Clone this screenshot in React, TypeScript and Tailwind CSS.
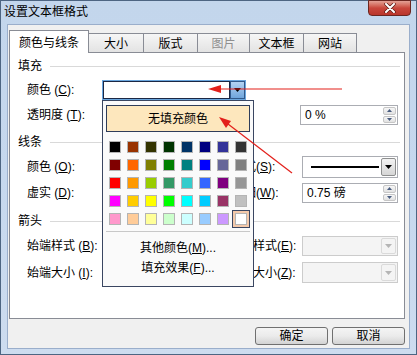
import React from "react"

const palette = [
  ["#000000", "#993300", "#333300", "#003300", "#003366", "#000080", "#333399", "#333333"],
  ["#800000", "#FF6600", "#808000", "#008000", "#008080", "#0000FF", "#666699", "#808080"],
  ["#FF0000", "#FF9900", "#99CC00", "#339966", "#33CCCC", "#3366FF", "#800080", "#969696"],
  ["#FF00FF", "#FFCC00", "#FFFF00", "#00FF00", "#00FFFF", "#00CCFF", "#993366", "#C0C0C0"],
  ["#FF99CC", "#FFCC99", "#FFFF99", "#CCFFCC", "#CCFFFF", "#99CCFF", "#CC99FF", "#FFFFFF"],
]

const tabs = [
  { label: "颜色与线条", width: "w-[80px]", active: true },
  { label: "大小", width: "w-[55px]" },
  { label: "版式", width: "w-[55px]" },
  { label: "图片", width: "w-[53px]", disabled: true },
  { label: "文本框", width: "w-[55px]" },
  { label: "网站", width: "w-[54px]" },
]

function Tri({ color = "#000" }: { color?: string }) {
  return (
    <svg width="7" height="4" viewBox="0 0 7 4">
      <path d="M0 0H7L3.5 4z" fill={color} />
    </svg>
  )
}

function DropBtn({ disabled }: { disabled?: boolean }) {
  return (
    <div
      className={
        disabled
          ? "w-[15px] my-px mr-px flex items-center justify-center rounded-[2px] border border-[#dadada] bg-[#f4f4f4]"
          : "w-[15px] my-px mr-px flex items-center justify-center rounded-[2px] border border-[#8e8f8f] bg-gradient-to-b from-[#f3f3f3] to-[#d6d6d6]"
      }
    >
      <Tri color={disabled ? "#b5b5b5" : "#000"} />
    </div>
  )
}

function SpinBox({ value, className }: { value: string; className: string }) {
  return (
    <div className={`flex border border-[#abadb3] bg-white ${className}`}>
      <span className="flex-1 flex items-center pl-[4px]">{value}</span>
      <div className="w-[15px] flex flex-col gap-px p-px">
        <div className="flex-1 flex items-center justify-center rounded-[2px] border border-[#c6c6c6] bg-gradient-to-b from-[#f6f6f6] to-[#e2e2e2]">
          <svg width="5" height="3" viewBox="0 0 5 3">
            <path d="M2.5 0L5 3H0z" fill="#4a5d80" />
          </svg>
        </div>
        <div className="flex-1 flex items-center justify-center rounded-[2px] border border-[#c6c6c6] bg-gradient-to-b from-[#f6f6f6] to-[#e2e2e2]">
          <svg width="5" height="3" viewBox="0 0 5 3">
            <path d="M0 0H5L2.5 3z" fill="#4a5d80" />
          </svg>
        </div>
      </div>
    </div>
  )
}

function Section({ title, className }: { title: string; className: string }) {
  return (
    <div className={`flex items-center h-[16px] pl-[8px] pr-[4px] ${className}`}>
      <span>{title}</span>
      <div className="flex-1 h-px ml-[8px] bg-[#d9d9d9]" />
    </div>
  )
}

function ColorPopup() {
  return (
    <div className="absolute -left-px top-[19px] z-20 w-[152px] h-[187px] flex flex-col border border-[#3a4661] bg-[#fafafa]">
      <div className="mt-[4px] mx-[3px] h-[27px] flex items-center justify-center border border-[#2f3d5a] bg-[#fde7bd]">
        无填充颜色
      </div>
      <div className="mt-[6px] ml-[3px] grid grid-cols-[repeat(8,18px)] grid-rows-[repeat(5,18px)]">
        {palette.flatMap((row, r) =>
          row.map((c, i) => {
            const selected = r === 4 && i === 7
            return (
              <div
                key={`${r}-${i}`}
                className={
                  selected
                    ? "flex items-center justify-center border border-[#3a4661] bg-[#f4c9aa]"
                    : "flex items-center justify-center"
                }
              >
                <div className="w-[12px] h-[12px] border border-[#b4b4b4]" style={{ backgroundColor: c }} />
              </div>
            )
          })
        )}
      </div>
      <div className="mt-[3px] mx-[3px] h-px bg-[#c8c8c8]" />
      <div className="mt-[6px] h-[20px] flex items-center justify-center">
        其他颜色(<u>M</u>)...
      </div>
      <div className="h-[20px] flex items-center justify-center">
        填充效果(<u>F</u>)...
      </div>
    </div>
  )
}

export default function App() {
  return (
    <div className="relative w-[417px] h-[355px] overflow-hidden font-['Liberation_Sans','Noto_Sans_CJK_SC',sans-serif] text-[12px] leading-[16px] text-black">
      <div className="w-full h-full flex flex-col border border-[#4d6582] bg-gradient-to-b from-[#c3d6ec] via-[#c6d8ee] to-[#cddcef]">
        {/* Title bar */}
        <div className="h-[23px] shrink-0 flex items-start">
          <span className="pl-[3px] pt-[3px]">设置文本框格式</span>
          <div className="ml-auto mr-[5px] -mt-px w-[43px] h-[16px] flex items-center justify-center rounded-b-[4px] border border-[#6b2620] bg-gradient-to-b from-[#e3a196] via-[#c9473c] to-[#b9352b]">
            <svg width="12" height="10" viewBox="0 0 12 10">
              <path d="M2 1L10 9M10 1L2 9" stroke="#5a1a14" strokeWidth="3.4" strokeLinecap="round" />
              <path d="M2 1L10 9M10 1L2 9" stroke="#fff" strokeWidth="2" strokeLinecap="round" />
            </svg>
          </div>
        </div>

        {/* Client area */}
        <div className="ml-[6px] w-[403px] h-[325px] flex flex-col border border-[#9aaecb] bg-[#f0f0f0]">
          {/* Tabs */}
          <div className="h-[27px] shrink-0 flex items-end pl-px">
            {tabs.map((t, i) =>
              t.active ? (
                <div
                  key={t.label}
                  className={`relative z-10 -mb-px h-[23px] ${t.width} flex items-center justify-center pt-[2px] border border-b-0 border-[#898c95] bg-white`}
                >
                  {t.label}
                </div>
              ) : (
                <div
                  key={t.label}
                  className={`h-[19px] ${t.width} -ml-px flex items-center justify-center pt-px border border-b-0 border-[#898c95] bg-gradient-to-b from-[#f6f6f6] to-[#e3e3e3] ${
                    t.disabled ? "text-[#8f8f8f]" : ""
                  } ${i === 1 ? "border-l-0 ml-0" : ""}`}
                >
                  {t.label}
                </div>
              )
            )}
          </div>

          {/* Panel */}
          <div className="relative ml-px w-[396px] h-[267px] shrink-0 border border-[#898c95] bg-white">
            <Section title="填充" className="mt-[5px]" />

            <div className="mt-[6px] h-[20px] flex items-center pl-[17px]">
              <span className="w-[75px]">
                颜色 (<u>C</u>):
              </span>
              <div className="relative flex h-[20px] w-[144px] border border-[#6aa6de] bg-[#dbe9f7]">
                <div className="w-[127px] h-full border border-[#1b2744] bg-white" />
                <div className="flex-1 flex items-center justify-center border border-[#31598a] bg-gradient-to-b from-[#b3d3f2] to-[#6fa5db]">
                  <Tri />
                </div>
                <ColorPopup />
              </div>
            </div>

            <div className="mt-[5px] h-[20px] flex items-center pl-[17px]">
              <span className="w-[75px]">
                透明度 (<u>T</u>):
              </span>
              <div className="w-[198px]" />
              <SpinBox value="0 %" className="w-[98px] h-[20px]" />
            </div>

            <Section title="线条" className="mt-[9px]" />

            <div className="mt-[6px] h-[22px] flex items-center pl-[17px]">
              <span className="w-[75px]">
                颜色 (<u>O</u>):
              </span>
              <div className="w-[130px]" />
              <span className="w-[70px] whitespace-nowrap">
                样式(<u>S</u>):
              </span>
              <div className="w-[96px] h-[22px] flex border border-[#abadb3] bg-white">
                <div className="flex-1 flex items-center pl-[8px] pr-[2px]">
                  <div className="w-full h-[2px] bg-black" />
                </div>
                <DropBtn />
              </div>
            </div>

            <div className="mt-[5px] h-[20px] flex items-center pl-[17px]">
              <span className="w-[75px]">
                虚实 (<u>D</u>):
              </span>
              <div className="w-[130px]" />
              <span className="w-[70px] whitespace-nowrap">
                粗细(<u>W</u>):
              </span>
              <SpinBox value="0.75 磅" className="w-[96px] h-[20px]" />
            </div>

            <Section title="箭头" className="mt-[10px]" />

            <div className="mt-[7px] h-[20px] flex items-center pl-[17px]">
              <span className="w-[75px] whitespace-nowrap">
                始端样式 (<u>B</u>):
              </span>
              <div className="w-[127px]" />
              <span className="w-[73px] whitespace-nowrap">
                末端样式(<u>E</u>):
              </span>
              <div className="w-[96px] h-[20px] flex border border-[#cccccc] bg-[#f4f4f4]">
                <div className="flex-1" />
                <DropBtn disabled />
              </div>
            </div>

            <div className="mt-[6px] h-[21px] flex items-center pl-[17px]">
              <span className="w-[75px] whitespace-nowrap">
                始端大小 (<u>I</u>):
              </span>
              <div className="w-[127px]" />
              <span className="w-[73px] whitespace-nowrap">
                末端大小(<u>Z</u>):
              </span>
              <div className="w-[96px] h-[21px] flex border border-[#cccccc] bg-[#f4f4f4]">
                <div className="flex-1" />
                <DropBtn disabled />
              </div>
            </div>
          </div>

          {/* Buttons */}
          <div className="mt-[8px] h-[18px] flex justify-end gap-[4px] pr-[4px]">
            <button className="w-[73px] h-[18px] flex items-center justify-center rounded-[3px] border border-[#707070] bg-gradient-to-b from-[#f4f4f4] via-[#ebebeb] to-[#d3d3d3]">
              确定
            </button>
            <button className="w-[73px] h-[18px] flex items-center justify-center rounded-[3px] border border-[#707070] bg-gradient-to-b from-[#f4f4f4] via-[#ebebeb] to-[#d3d3d3]">
              取消
            </button>
          </div>
        </div>
      </div>

      {/* Red annotation arrows */}
      <svg className="pointer-events-none absolute inset-0 z-50" width="417" height="355" viewBox="0 0 417 355">
        <line x1="342" y1="89" x2="218" y2="89" stroke="#e3201b" strokeWidth="1.2" />
        <path d="M208 89L221 85V93z" fill="#e3201b" />
        <line x1="292" y1="173" x2="228" y2="124" stroke="#e3201b" strokeWidth="1.2" />
        <path d="M219 117L231 121L226 128z" fill="#e3201b" />
      </svg>
    </div>
  )
}
